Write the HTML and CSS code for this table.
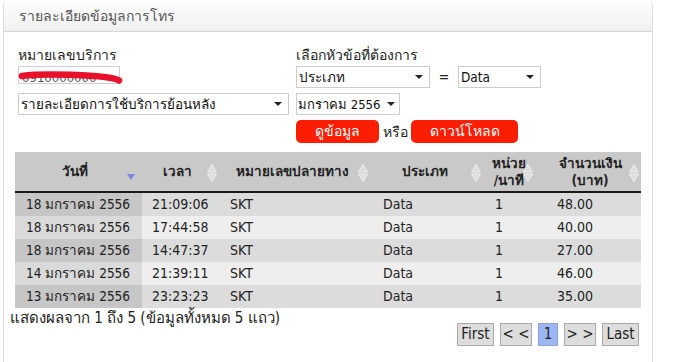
FILE: index.html
```html
<!DOCTYPE html>
<html lang="th">
<head>
<meta charset="utf-8">
<title>รายละเอียดข้อมูลการโทร</title>
<link rel="stylesheet" href="styles.css">
</head>
<body>
<div class="panel">
  <div class="panel-head">รายละเอียดข้อมูลการโทร</div>
  <div class="panel-body">
    <form class="filters">
      <div class="col col-left">
        <label class="lbl">หมายเลขบริการ</label>
        <div class="masked">
          <input class="txt" type="text" value="0910000000">
          <svg class="scribble" width="106" height="16" viewBox="0 0 106 16"><path d="M4 6 C 22 3.5, 50 4.5, 76 6 C 90 7, 98 8.5, 101 10.5" stroke="#e8102b" stroke-width="6.5" fill="none" stroke-linecap="round"/></svg>
        </div>
        <div class="sel sel-service"><select><option>รายละเอียดการใช้บริการย้อนหลัง</option></select></div>
      </div>
      <div class="col col-right">
        <label class="lbl">เลือกหัวข้อที่ต้องการ</label>
        <div class="line">
          <div class="sel sel-field"><select><option>ประเภท</option></select></div>
          <span class="eq">=</span>
          <div class="sel sel-value"><select><option>Data</option></select></div>
        </div>
        <div class="line">
          <div class="sel sel-month"><select><option>มกราคม 2556</option></select></div>
        </div>
        <div class="line">
          <button type="button" class="btn btn-view">ดูข้อมูล</button>
          <span class="or">หรือ</span>
          <button type="button" class="btn btn-dl">ดาวน์โหลด</button>
        </div>
      </div>
    </form>

    <table class="grid">
      <thead>
        <tr>
          <th class="c1">วันที่<svg class="ico ico-desc" width="8" height="6" viewBox="0 0 8 6"><polygon points="0,0 8,0 4,6" fill="#7d84e4"/></svg></th>
          <th class="c2">เวลา<svg class="ico ico-both" width="10" height="18" viewBox="0 0 10 18"><polygon points="5,0.5 9.5,8 0.5,8" /><polygon points="0.5,10 9.5,10 5,17.5" /></svg></th>
          <th class="c3">หมายเลขปลายทาง<svg class="ico ico-both" width="10" height="18" viewBox="0 0 10 18"><polygon points="5,0.5 9.5,8 0.5,8" /><polygon points="0.5,10 9.5,10 5,17.5" /></svg></th>
          <th class="c4">ประเภท<svg class="ico ico-both" width="10" height="18" viewBox="0 0 10 18"><polygon points="5,0.5 9.5,8 0.5,8" /><polygon points="0.5,10 9.5,10 5,17.5" /></svg></th>
          <th class="c5">หน่วย<br>/นาที<svg class="ico ico-both" width="10" height="18" viewBox="0 0 10 18"><polygon points="5,0.5 9.5,8 0.5,8" /><polygon points="0.5,10 9.5,10 5,17.5" /></svg></th>
          <th class="c6">จำนวนเงิน<br>(บาท)<svg class="ico ico-both" width="10" height="18" viewBox="0 0 10 18"><polygon points="5,0.5 9.5,8 0.5,8" /><polygon points="0.5,10 9.5,10 5,17.5" /></svg></th>
        </tr>
      </thead>
      <tbody>
        <tr class="odd"><td class="sorted">18 มกราคม 2556</td><td>21:09:06</td><td>SKT</td><td>Data</td><td>1</td><td>48.00</td></tr>
        <tr class="even"><td class="sorted">18 มกราคม 2556</td><td>17:44:58</td><td>SKT</td><td>Data</td><td>1</td><td>40.00</td></tr>
        <tr class="odd"><td class="sorted">18 มกราคม 2556</td><td>14:47:37</td><td>SKT</td><td>Data</td><td>1</td><td>27.00</td></tr>
        <tr class="even"><td class="sorted">14 มกราคม 2556</td><td>21:39:11</td><td>SKT</td><td>Data</td><td>1</td><td>46.00</td></tr>
        <tr class="odd"><td class="sorted">13 มกราคม 2556</td><td>23:23:23</td><td>SKT</td><td>Data</td><td>1</td><td>35.00</td></tr>
      </tbody>
    </table>

    <div class="table-foot">
      <div class="info">แสดงผลจาก 1 ถึง 5 (ข้อมูลทั้งหมด 5 แถว)</div>
      <div class="pager">
        <span class="pg pg-wide">First</span>
        <span class="pg pg-mid">&lt; &lt;</span>
        <span class="pg pg-active">1</span>
        <span class="pg pg-mid">&gt; &gt;</span>
        <span class="pg pg-wide">Last</span>
      </div>
    </div>
  </div>
</div>
</body>
</html>
```

FILE: styles.css
```css
* { box-sizing: border-box; }

html, body {
  margin: 0;
  padding: 0;
  background: #fff;
}

body {
  font-family: "DejaVu Sans Condensed", "DejaVu Sans", sans-serif;
  font-size: 14px;
  color: #222;
  overflow: hidden;
  height: 362px;
}

.panel {
  margin-left: 3px;
  width: 650px;
  height: 380px;
  border: 1px solid #dcdcdc;
  border-top: none;
  border-radius: 6px 6px 0 0;
}

.panel-head {
  height: 32px;
  padding: 6px 0 0 15px;
  background: linear-gradient(#ffffff, #efefef);
  border-bottom: 1px solid #d6d6d6;
  border-radius: 6px 6px 0 0;
  color: #555;
  font-size: 14px;
  line-height: 20px;
}

.panel-body {
  padding: 15px 0 0 11px;
}

.filters {
  display: flex;
  margin-left: 3px;
}

.col {
  display: flex;
  flex-direction: column;
  gap: 5px;
}

.col-left { width: 278px; }

.lbl {
  display: block;
  height: 16px;
  line-height: 16px;
  margin-bottom: -2px;
  font-size: 14px;
  color: #222;
}

.masked {
  position: relative;
  height: 22px;
}

.txt {
  width: 102px;
  height: 18px;
  margin: 0;
  padding: 4px 3px 0;
  border: 1px solid #cfcfcf;
  font: inherit;
  font-size: 13px;
  color: #555;
  line-height: 16px;
}

.scribble {
  position: absolute;
  left: 0;
  top: 4px;
}

.line {
  display: flex;
  align-items: center;
  height: 22px;
}

.line:last-child { height: 23px; }

.sel {
  position: relative;
  height: 22px;
}

.sel select {
  appearance: none;
  -webkit-appearance: none;
  width: 100%;
  height: 22px;
  margin: 0;
  padding: 0 14px 0 2px;
  border: 1px solid #cccccc;
  border-radius: 0;
  background: #fff;
  font: inherit;
  font-size: 13.5px;
  color: #111;
}

.sel::after {
  content: "";
  position: absolute;
  right: 7px;
  top: 9px;
  border-left: 4px solid transparent;
  border-right: 4px solid transparent;
  border-top: 4px solid #222;
  pointer-events: none;
}

.sel-service { width: 271px; }
.sel-field { width: 134px; }
.sel-value { width: 83px; }
.sel-month { width: 104px; }
.sel-month select { font-size: 13px; padding-left: 1px; }
.sel-month::after { right: 5px; }

.eq {
  width: 28px;
  text-align: center;
  color: #222;
}

.btn {
  height: 23px;
  margin: 0;
  padding: 0;
  border: none;
  border-radius: 5px;
  background: #fb1e02;
  color: #fff;
  font: inherit;
  font-size: 14px;
  line-height: 23px;
}

.btn-view { width: 83px; }
.btn-dl { width: 107px; }

.or {
  width: 32px;
  text-align: center;
}

.grid {
  margin-top: 9px;
  width: 626px;
  border-collapse: collapse;
  table-layout: fixed;
}

.grid th {
  position: relative;
  height: 40px;
  padding: 0 18px 0 10px;
  background: #c9c9c9;
  border-bottom: 2px solid #1a1a1a;
  font-weight: bold;
  font-size: 13.5px;
  text-align: center;
  line-height: 17px;
  color: #222;
}

.grid .c1 { width: 127px; }
.grid .c2 { width: 78px; }
.grid .c3 { width: 153px; }
.grid .c4 { width: 112px; }
.grid .c5 { width: 62px; padding: 0 14px 0 0; }
.grid .c6 { width: 94px; padding: 0 16px 0 8px; }

.ico {
  position: absolute;
  top: 50%;
}

.ico-both {
  margin-top: -8px;
  fill: #dedede;
  stroke: #eeeeee;
  stroke-width: 1;
}

.ico-desc { margin-top: 2px; }

.c1 .ico { right: 7px; }
.c2 .ico { right: 3px; }
.c3 .ico { right: 5px; }
.c4 .ico { right: 4px; }
.c5 .ico { right: 14px; }
.c6 .ico { right: 2px; }

.grid td {
  height: 23px;
  padding: 0 10px;
  line-height: 23px;
  white-space: nowrap;
  color: #222;
}

.grid td:first-child { padding-left: 11px; font-size: 13.5px; }

.odd td { background: #dcdcdc; }
.even td { background: #eeeeee; }
.odd td.sorted { background: #c6c6c6; }
.even td.sorted { background: #dadada; }

.table-foot {
  display: flex;
  justify-content: space-between;
  align-items: flex-start;
  width: 629px;
  margin-left: -5px;
}

.info {
  margin-top: 1px;
  font-family: "Liberation Sans Narrow", "DejaVu Sans Condensed", sans-serif;
  font-size: 15px;
  line-height: 18px;
  color: #222;
}

.pager {
  display: flex;
  gap: 6px;
  margin-top: 15px;
}

.pg {
  height: 23px;
  padding: 0;
  border: 1px solid #aaaaaa;
  background: #dddddd;
  font-family: "Liberation Sans Narrow", "DejaVu Sans Condensed", sans-serif;
  font-size: 15px;
  line-height: 21px;
  text-align: center;
  color: #222;
  white-space: nowrap;
}

.pg-wide { width: 37px; }
.pg-mid { width: 32px; }

.pg-active {
  width: 20px;
  background: #9db6f6;
  border-color: #8da3dc;
}
```
